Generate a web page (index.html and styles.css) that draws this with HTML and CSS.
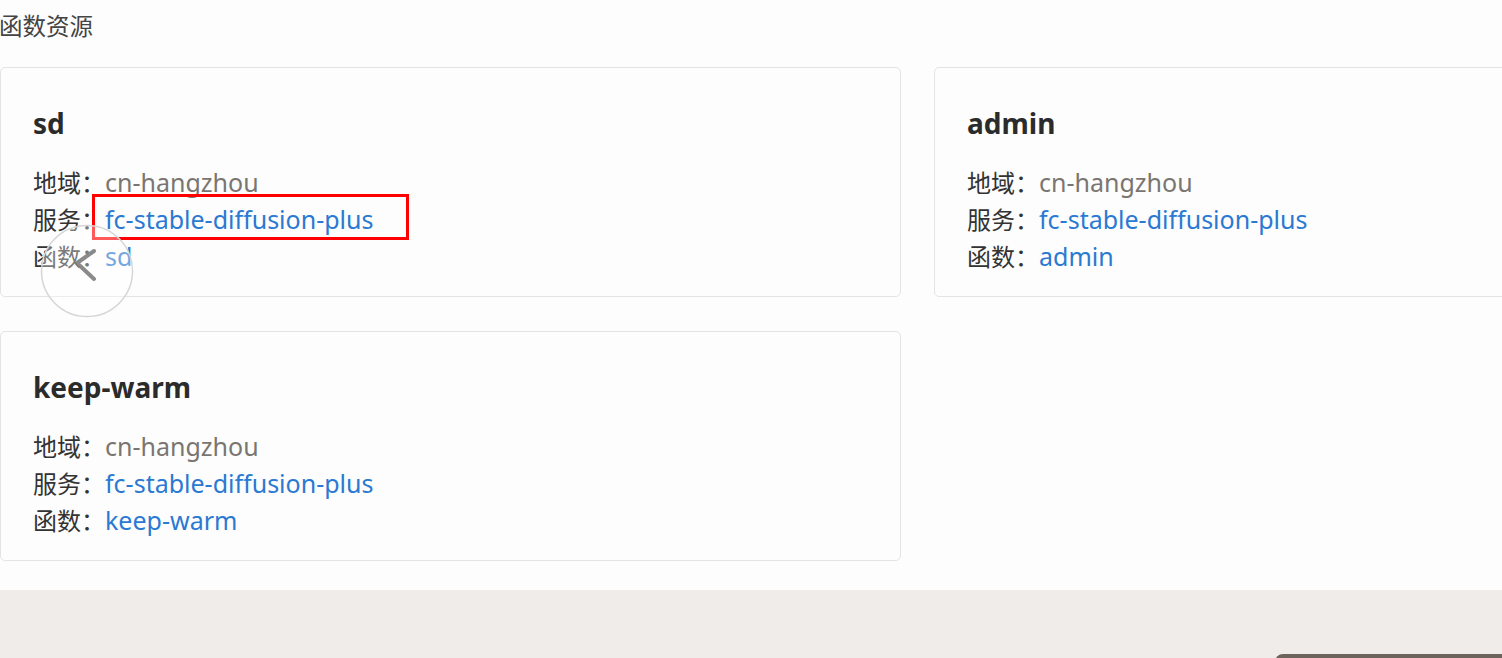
FILE: index.html
```html
<!DOCTYPE html>
<html lang="zh-CN">
<head>
<meta charset="utf-8">
<title>函数资源</title>
<link rel="stylesheet" href="styles.css">
</head>
<body>
<div class="page">
  <div class="heading">函数资源</div>
  <div class="grid">
    <div class="card">
      <div class="title">sd</div>
      <div class="row"><span class="label">地域：</span><span class="value">cn-hangzhou</span></div>
      <div class="row"><span class="label">服务：</span><span class="link highlight">fc-stable-diffusion-plus</span></div>
      <div class="row"><span class="label">函数：</span><span class="link">sd</span></div>
      <div class="nav-prev">
        <svg width="94" height="94" viewBox="0 0 94 94"><circle cx="47" cy="47" r="45.5" fill="rgba(255,255,255,0.35)" stroke="#d6d6d6" stroke-width="1.5"/><path d="M54 27 L37 39 L54 55" fill="none" stroke="#7d7d7d" stroke-width="4" stroke-linecap="round" stroke-linejoin="round" opacity="0.9"/></svg>
      </div>
    </div>
    <div class="card">
      <div class="title">admin</div>
      <div class="row"><span class="label">地域：</span><span class="value">cn-hangzhou</span></div>
      <div class="row"><span class="label">服务：</span><span class="link">fc-stable-diffusion-plus</span></div>
      <div class="row"><span class="label">函数：</span><span class="link">admin</span></div>
    </div>
    <div class="card">
      <div class="title">keep-warm</div>
      <div class="row"><span class="label">地域：</span><span class="value">cn-hangzhou</span></div>
      <div class="row"><span class="label">服务：</span><span class="link">fc-stable-diffusion-plus</span></div>
      <div class="row"><span class="label">函数：</span><span class="link">keep-warm</span></div>
    </div>
  </div>
</div>
<div class="footer">
  <div class="dock"></div>
</div>
</body>
</html>
```
FILE: styles.css
```css
html, body {
  margin: 0;
  padding: 0;
}
body {
  width: 1502px;
  height: 658px;
  overflow: hidden;
  background: #fdfdfd;
  font-family: "Noto Sans", "Noto Sans CJK SC", sans-serif;
  color: #333;
}
.page {
  height: 590px;
  box-sizing: border-box;
  padding-top: 10px;
}
.heading {
  font-family: "Noto Sans CJK SC", sans-serif;
  font-size: 23.5px;
  line-height: 30px;
  color: #444;
  margin-left: -1px;
}
.grid {
  margin-top: 27px;
  width: 1835px;
  display: grid;
  grid-template-columns: 901px 901px;
  column-gap: 33px;
  row-gap: 34px;
}
.card {
  position: relative;
  box-sizing: border-box;
  height: 230px;
  border: 1px solid #e4e4e4;
  border-radius: 5px;
  background: #fdfdfd;
  padding: 39px 32px 0;
}
.title {
  font-size: 28px;
  font-weight: 700;
  line-height: 32px;
  color: #2b2b2b;
  margin-bottom: 24px;
}
.row {
  line-height: 37px;
  height: 37px;
  white-space: nowrap;
}
.label {
  font-family: "Noto Sans CJK SC", sans-serif;
  font-size: 24px;
  line-height: 37px;
  color: #333;
}
.value, .link {
  font-size: 25px;
  line-height: 37px;
}
.value {
  color: #7a7570;
}
.link {
  color: #2a79d2;
}
.highlight {
  position: relative;
}
.highlight::before {
  content: "";
  position: absolute;
  left: -13px;
  right: -36px;
  top: -8px;
  bottom: -4px;
  border: 3px solid #ff0000;
}
.nav-prev {
  position: absolute;
  left: 39px;
  top: 156px;
  width: 94px;
  height: 94px;
}
.footer {
  position: relative;
  height: 68px;
  background: #efecea;
}
.dock {
  position: absolute;
  left: 1275px;
  top: 64px;
  width: 240px;
  height: 20px;
  border-radius: 8px 0 0 0;
  background: #6b635c;
}
```
